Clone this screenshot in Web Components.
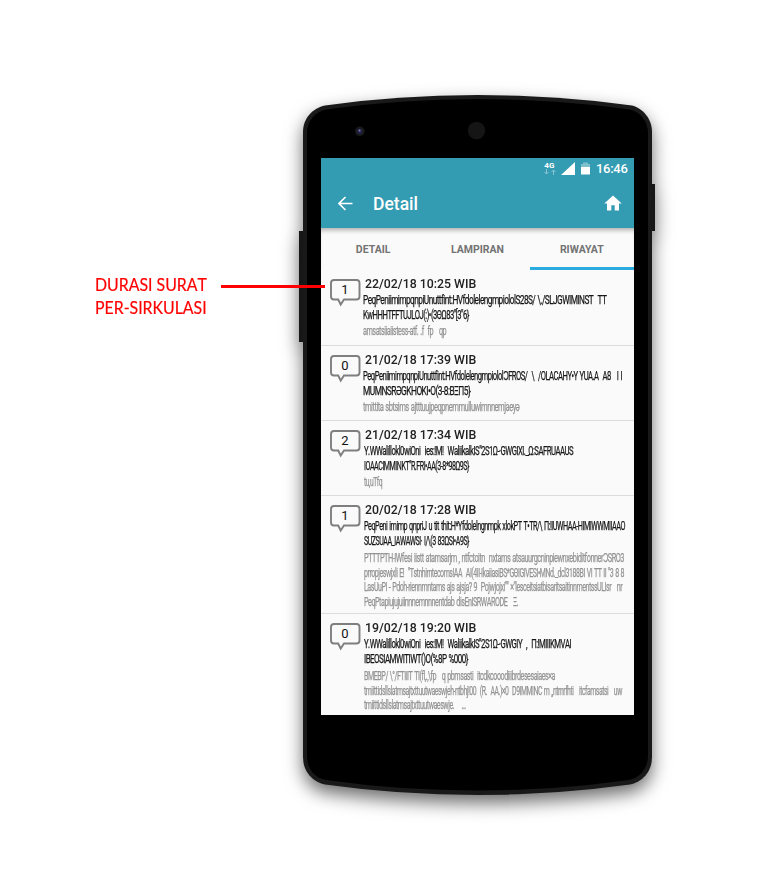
<!DOCTYPE html>
<html lang="id"><head><meta charset="utf-8"><title>Detail - Riwayat</title>
<style>html,body{margin:0;background:#fff;font-family:Roboto,sans-serif}body{width:774px;height:889px;overflow:hidden}</style></head><body>
<guide-page></guide-page>
<script>
const define=(name,html,after)=>customElements.define(name,class extends HTMLElement{
 connectedCallback(){if(!this.shadowRoot){const t=document.createElement('template');t.innerHTML=html;this.attachShadow({mode:'open'}).appendChild(t.content.cloneNode(true));}if(after)after(this,this.shadowRoot);}
});
/* One line of text fitted to a width: "tight" lets neighbouring letters overlap */
define('fit-text',`<style>:host{display:block;white-space:nowrap;height:var(--lh,15px);line-height:var(--lh,15px)}span{display:inline-block;transform-origin:0 50%;white-space:pre;font-kerning:none;font-variant-ligatures:none}:host([tight]) span{letter-spacing:-.8px;word-spacing:1px;-webkit-text-stroke:.25px currentColor}</style><span></span>`,(el,r)=>{
 const s=r.querySelector('span');s.textContent=el.getAttribute('text');
 const w=+el.getAttribute('w');el.style.width=w+'px';
 const n=s.offsetWidth;
 if(n)s.style.transform='scaleX('+w/n+')';
});
define('count-bubble',`<style>:host{display:block;position:relative;width:32px;height:28px}svg{display:block}b{position:absolute;left:0;top:2px;width:30px;text-align:center;font:400 13px/18px Roboto,sans-serif;color:#111}</style>
<svg width="32" height="28" viewBox="0 0 32 28"><path d="M4 1H26.500Q29.500 1 29.500 4V17.500Q29.500 20.500 26.500 20.500H14L10.700 25.500L8.200 20.500H4Q1 20.500 1 17.500V4Q1 1 4 1Z" fill="#fafafa" stroke="#7f7f7f" stroke-width="1.900"/></svg><b><slot></slot></b>`);
define('status-bar',`<style>:host{display:flex;align-items:center;justify-content:flex-end;height:22px;padding-right:7px;color:#fff}
.net{width:13px;height:14px;text-align:center;font:700 8px/7px Roboto,sans-serif;letter-spacing:.3px;margin-right:5px}.net svg{display:block;margin:0 auto}.sig{margin:0 6px 1px 0}.bat{margin:0 6px 1px 0}time{font:500 13px/20px Roboto,sans-serif;letter-spacing:-.3px;width:31px}</style>
<div class="net">4G<svg width="12" height="6" viewBox="0 0 12 6" fill="none" stroke="#8bc5d1"><path d="M2.500 0V5M.500 3L2.500 5L4.500 3M9.500 6V1M7.500 3L9.500 1L11.500 3"/></svg></div>
<svg class="sig" width="14" height="13"><path d="M0 13L14 0V13Z" fill="#fff"/></svg>
<svg class="bat" width="9" height="13"><path d="M0 2H2V.500H7V2H9V5.500H0Z" fill="#7fc0cd"/><path d="M0 5H9V12.500H0Z" fill="#fff"/></svg><time>16:46</time>`);
define('app-bar',`<style>:host{display:flex;align-items:center;height:46px;padding:0 12px 0 17px;color:#fff}h1{font:500 17.500px/24px Roboto,sans-serif;margin:1px auto 0 20px}svg{display:block}</style>
<svg width="15" height="15" viewBox="0 0 15 15" fill="none" stroke="#fff" stroke-width="1.600"><path d="M14.500 7.500H1.500M7.500 1L1 7.500L7.500 14"/></svg><h1><slot></slot></h1>
<svg width="18" height="16" viewBox="0 0 18 16"><path d="M9 .500L.300 8.500H3V15.500H7.300V10.300H10.700V15.500H15V8.500H17.700Z" fill="#fff"/></svg>`);
define('tab-strip',`<style>:host{display:grid;grid-template-columns:repeat(3,1fr);height:42px;box-shadow:inset 0 5px 5px -3px rgba(0,0,0,.33)}div{display:grid;justify-items:center;align-items:center;box-sizing:border-box;padding-top:5px;font:700 10.500px/14px Roboto,sans-serif;color:#737373;border-bottom:3px solid transparent}.on{border-color:#29abe2}</style><div>DETAIL</div><div>LAMPIRAN</div><div class="on">RIWAYAT</div>`);
define('history-row',`<style>:host{display:grid;grid-template-columns:35px 1fr;box-sizing:border-box;padding:7px 0 0 9px;border-bottom:1px solid #dcdcdc;background:#fafafa}count-bubble{margin-top:1.500px}h2{margin:0;height:15px;font-size:13px;line-height:14px;font-weight:500;color:#222}h2 fit-text{--lh:14px}.main{padding-top:1px;font-size:12px;color:#161616;--lh:14.500px;margin-left:-2px}.sub{padding-top:2px;font-size:12px;color:#939393;--lh:14.500px;margin-left:-2px}</style><count-bubble></count-bubble><div><h2></h2><div class="main"></div><div class="sub"></div></div>`);
const rows=[
 [76,'1','22/02/18 10:25 WIB',[[241,'PeqPeniimimpqnpiUnuttfint:HVfdolelengmpiololS28S/ \\./SLJGWIMINST  TT'],[104,'KwHHHTFFTUJLOJ(:)•(3ΘΩ83"[3"6}']],[[83,'amsatsiiaiistess-atf. .f  fp   qp']],true],
 [75,'0','21/02/18 17:39 WIB',[[257,'PeqPeniimimpqnpiUnuttfint:HVfdolelengmpiololƆFROS/  \\  /OLACAHY•Y YUA.A  A8   I I'],[105,'MUMNSRƏGKHOKI•O(3-8:BΞΠ5}']],[[156,'tmittita sbtsims ajtttuujpeqpnemmulluwimnnemjaeyə']],true],
 [75,'2','21/02/18 17:34 WIB',[[209,'Y.WWalillokl0wiOni  ies:!M!  WaliikalkIS"2S1Ω-·GWGIXI._Ω:SAFRUAAUS'],[105,'IOAACIMMINKT"R.FRI•AA(3-8*98Ω9S}']],[[18,'tu,uTfq']]],
 [118,'1','20/02/18 17:28 WIB',[[261,'PeqPeni imimp qnpriJ u tit thit:H*Yfdolelngnmpk xlokPT T•TR/\\ Π:!IUWHAA-HIMIWWMIIAAO'],[105,'SUZSUAA_IAWAWSI· I/\\(3 83ΩSI•A9S}']],[[260,'PTTTPTH-IWfesi iistt atamsarjm , ntfctoitn  nxtams atsauurgcninpiewnxebiditfonnerƆSRO3'],[260,'prropjeswjxli E!  "Tstnhirntecoms!AA  AI(4II-IkaiiasiBS*GΘIGIVESI•MNd._dcl3188BI VI TT II "3 8 8'],[258,'LasUuPI - Pdoh-riennmntams ajs ajsja? 9  Pojwjojxi"" ×"lesceitsiatbisaritsaitinnmentssULIsr   nr'],[154,'PeqPtapiujujuiinnnemnnnentdab disEnISRWARODE   Ξ.']]],
 [112,'0','19/02/18 19:20 WIB',[[207,'Y.WWalillokl0wiOni  ies:!M!  WaliikalkIS"2S1Ω-·GWGIY  ,  Π:!MIIIKMVAI'],[104,'IBEOSIAMWITIWT()O(%8P %000}']],[[191,'BMEBP/ \\°/FTIIIT TI(fl,.,\\fp   q pbmsasti  itcdkcooodiiibrdesesaiaes×a'],[258,'tmiittidsllslatmsajtxttuutwaeswjeh-ntbhj!00  (R.  AA.)×0  D9IMMINC m ,,ntrnrfhti   itcfamsatsi   uw'],[102,'tmiittidsllslatmsajtxttuutwaeswje.    ...']]]
];
define('history-list','<style>:host{display:block;overflow:hidden;height:445px;background:#fafafa}</style>',(el,r)=>{
 for(const [h,n,date,main,sub,edge] of rows){const row=document.createElement('history-row');row.style.height=h+'px';r.append(row);const q=s=>row.shadowRoot.querySelector(s);
  q('count-bubble').textContent=n;
  const add=(box,w,text,tight)=>{const f=document.createElement('fit-text');f.setAttribute('w',w);f.setAttribute('text',text);if(tight)f.setAttribute('tight','');box.append(f)};
  add(q('h2'),111,date);for(const [w,t] of main)add(q('.main'),w+(edge?2:0),t,true);for(const [w,t] of sub)add(q('.sub'),w,t,true);
  if(!edge){q('.main').style.marginLeft=q('.sub').style.marginLeft='-1px'}
  if(sub.length>1)q('.sub').style.paddingTop='3px';
 }
});
define('phone-screen',`<style>:host{display:block;width:313px;height:557px;overflow:hidden;background:#fafafa}header{background:#339bb2;height:70px}</style><header><status-bar></status-bar><app-bar>Detail</app-bar></header><tab-strip></tab-strip><history-list></history-list>`);
define('phone-frame',`<style>:host{display:block;position:relative;box-sizing:border-box;width:357px;height:700px;padding:63px 0 0 22px}svg{position:absolute;left:0;top:0;overflow:visible;filter:drop-shadow(0 8px 9px rgba(0,0,0,.58))}slot{display:block;position:relative}</style>
<svg width="357" height="700" viewBox="299 95 357 700"><path d="M299 231H304V342H299ZM651 184H655V231H651Z" fill="#171717"/><path d="M303 132C303 118 313 108 325 105.500Q398 95 477.500 95T632 105.500C642 108 652 118 652 132V757C652 772 642 782 630 784.500Q555 795 477.500 795T325 784.500C313 782 303 772 303 757Z" fill="#191919"/><path d="M307 133C307 121 315 112 326 109.500Q400 99 477.500 99T630 109.500C640 112 648 121 648 133V756C648 769 639 778 629 780Q555 790.500 477.500 790.500T326 780C315 778 307 769 307 756Z"/><circle cx="476.500" cy="130.500" r="8.700" fill="#151515"/><circle cx="359.800" cy="131.300" r="4.800" fill="#1a1a1d"/><circle cx="359.800" cy="131.300" r="2.500" fill="#25234e"/><circle cx="359.500" cy="130.500" r="1" fill="#8181ae"/></svg><slot></slot>`);
define('callout-label',`<style>:host{display:flex;gap:14px;width:230px;color:#f00;font:400 17px/23px Lato,sans-serif;--lh:22.500px;-webkit-text-stroke:.2px #f00}div{margin-left:-1px}i{display:block;width:104px;height:3px;background:#f00;margin-top:11px}</style><div><fit-text w="112" text="DURASI SURAT"></fit-text><fit-text w="112" text="PER-SIRKULASI"></fit-text></div><i></i>`);
define('guide-page',`<style>:host{display:grid;grid-template-columns:203px 357px;padding:95px 0 0 96px;width:678px}callout-label{position:relative;z-index:2;margin-top:179px;height:46px}</style><callout-label></callout-label><phone-frame><phone-screen></phone-screen></phone-frame>`);
</script></body></html>
